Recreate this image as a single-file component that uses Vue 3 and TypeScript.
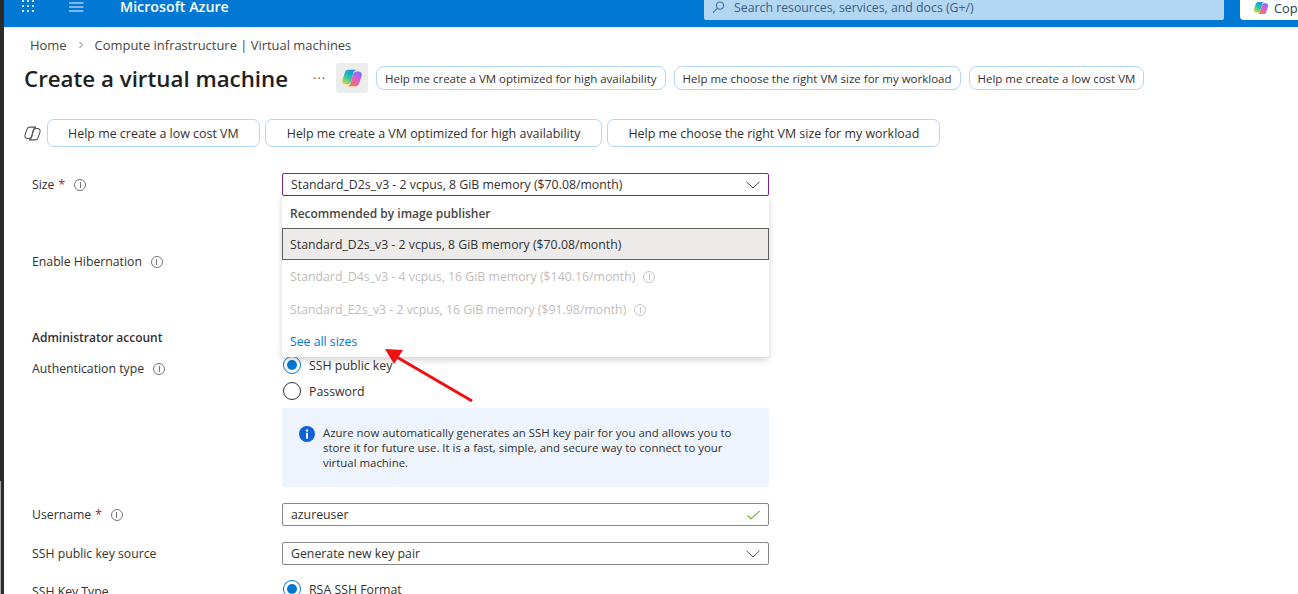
<script setup lang="ts">
const topPrompts: string[] = [
  'Help me create a VM optimized for high availability',
  'Help me choose the right VM size for my workload',
  'Help me create a low cost VM',
]
const lowerPrompts: string[] = [
  'Help me create a low cost VM',
  'Help me create a VM optimized for high availability',
  'Help me choose the right VM size for my workload',
]
const dots: number[][] = [[1,1],[6,1],[11,1],[1,6],[6,6],[11,6],[1,11],[6,11],[11,11]]
</script>

<template>
  <div class="page">
    <div class="strip"></div>
    <div class="main">
      <svg width="0" height="0" class="defs">
        <defs>
          <linearGradient id="g1" x1=".8" y1="0" x2=".1" y2="1"><stop offset="0" stop-color="#1a86ee"/><stop offset=".5" stop-color="#22c4a8"/><stop offset="1" stop-color="#f0d83c"/></linearGradient>
          <linearGradient id="g2" x1=".8" y1="0" x2=".3" y2="1"><stop offset="0" stop-color="#8a6cf5"/><stop offset=".55" stop-color="#e05fc4"/><stop offset="1" stop-color="#f47a3a"/></linearGradient>
          <symbol id="cp" viewBox="0 0 24 24">
            <path d="M8 3h9c-2 .3-3.200 1.800-3.800 4l-2.200 8.500c-.5 2-2 3.500-4 3.500H5C2 19 .7 16.500 1.500 14L4 6.500C4.700 4.300 6 3 8 3z" fill="url(#g1)"/>
            <path d="M16 21H7c2-.3 3.200-1.800 3.800-4L13 8.500C13.500 6.500 15 5 17 5h2c3 0 4.300 2.500 3.500 5L20 17.500c-.7 2.200-2 3.500-4 3.500z" fill="url(#g2)"/>
          </symbol>
        </defs>
      </svg>

      <header class="topbar">
        <div class="tb-left">
          <svg class="waffle" width="13" height="13" viewBox="0 0 13 13"><rect v-for="d in dots" :key="d.join()" :x="d[0]-1" :y="d[1]-1" width="2" height="2" fill="#cfe4f7"/></svg>
          <svg class="burger" width="15" height="10" viewBox="0 0 15 10"><path d="M0 1h14.500M0 5h14.500M0 9h14.500" stroke="#a5cdf0" stroke-width="1.400"/></svg>
          <span class="brand">Microsoft Azure</span>
        </div>
        <div class="search">
          <svg width="13" height="13" viewBox="0 0 13 13" fill="none" stroke="#3f6f99" stroke-width="1.100"><circle cx="8" cy="4.600" r="3.600"/><path d="M5.300 7.300 1 11.600"/></svg>
          <span>Search resources, services, and docs (G+/)</span>
        </div>
        <div class="cop-btn">
          <svg width="16" height="16" viewBox="0 0 24 24"><use href="#cp" /></svg>
          <span>Copilot</span>
        </div>
      </header>

      <nav class="crumbs">
        <span>Home</span>
        <svg width="6" height="8" viewBox="0 0 6 8" fill="none" stroke="#777" stroke-width="1"><path d="M1.500 1 4.500 4 1.500 7"/></svg>
        <span>Compute infrastructure | Virtual machines</span>
      </nav>

      <div class="title-row">
        <h1>Create a virtual machine</h1>
        <span class="more">···</span>
        <div class="cop-tile"><svg width="22" height="22" viewBox="0 0 24 24"><use href="#cp" /></svg></div>
        <div class="chips">
          <button v-for="p in topPrompts" :key="p" class="chip" type="button">{{ p }}</button>
        </div>
      </div>

      <div class="prompt-row">
        <svg class="mono" width="17" height="17" viewBox="0 0 24 24" fill="none" stroke="#555" stroke-width="1.500"><path d="M8 3h9c-2 .3-3.200 1.800-3.800 4l-2.200 8.500c-.5 2-2 3.500-4 3.500H5C2 19 .7 16.500 1.500 14L4 6.500C4.700 4.300 6 3 8 3z"/><path d="M16 21H7c2-.3 3.200-1.800 3.800-4L13 8.500C13.500 6.500 15 5 17 5h2c3 0 4.300 2.500 3.500 5L20 17.500c-.7 2.200-2 3.500-4 3.500z"/></svg>
        <button v-for="p in lowerPrompts" :key="p" class="wide-chip" type="button">{{ p }}</button>
      </div>

      <div class="form">
        <div class="row row-size">
          <label class="lbl">Size <em>*</em><i class="info"></i></label>
          <div class="ctl">
            <div class="select focus">
              <span>Standard_D2s_v3 - 2 vcpus, 8 GiB memory ($70.08/month)</span>
              <svg width="14" height="8" viewBox="0 0 14 8" fill="none" stroke="#444" stroke-width="1"><path d="M.5.800 7 7 13.500.800"/></svg>
            </div>
            <div class="menu">
              <div class="menu-head">Recommended by image publisher</div>
              <div class="opt selected">Standard_D2s_v3 - 2 vcpus, 8 GiB memory ($70.08/month)</div>
              <div class="opt off">Standard_D4s_v3 - 4 vcpus, 16 GiB memory ($140.16/month)<i class="info pale"></i></div>
              <div class="opt off">Standard_E2s_v3 - 2 vcpus, 16 GiB memory ($91.98/month)<i class="info pale"></i></div>
              <div class="opt link">See all sizes</div>
            </div>
          </div>
        </div>

        <div class="row row-hib">
          <label class="lbl">Enable Hibernation<i class="info"></i></label>
        </div>

        <div class="section">Administrator account</div>

        <div class="row row-auth">
          <label class="lbl">Authentication type<i class="info"></i></label>
          <div class="ctl">
            <div class="radios">
              <div class="radio on"><b></b>SSH public key</div>
              <div class="radio"><b></b>Password</div>
            </div>
            <div class="notice">
              <svg width="16" height="16" viewBox="0 0 16 16"><circle cx="8" cy="8" r="8" fill="#0f62d6"/><circle cx="8" cy="4.500" r="1.200" fill="#fff"/><rect x="7" y="6.800" width="2" height="5.800" fill="#fff"/></svg>
              <p>Azure now automatically generates an SSH key pair for you and allows you to store it for future use. It is a fast, simple, and secure way to connect to your virtual machine.</p>
            </div>
          </div>
        </div>

        <div class="row row-user">
          <label class="lbl">Username <em>*</em><i class="info"></i></label>
          <div class="ctl">
            <div class="select plain">
              <span>azureuser</span>
              <svg width="13" height="10" viewBox="0 0 13 10" fill="none" stroke="#6fb52c" stroke-width="1.100"><path d="M.5 5.500 4 9 12.500.8"/></svg>
            </div>
          </div>
        </div>

        <div class="row row-src">
          <label class="lbl">SSH public key source</label>
          <div class="ctl">
            <div class="select plain">
              <span>Generate new key pair</span>
              <svg width="14" height="8" viewBox="0 0 14 8" fill="none" stroke="#444" stroke-width="1"><path d="M.5.800 7 7 13.500.800"/></svg>
            </div>
          </div>
        </div>

        <div class="row row-type">
          <label class="lbl">SSH Key Type</label>
          <div class="ctl">
            <div class="radio on"><b></b>RSA SSH Format</div>
          </div>
        </div>
      </div>

      <svg class="arrow" width="100" height="65" viewBox="0 0 100 65">
        <path d="M87 53 10 8" stroke="#ee1111" stroke-width="3" fill="none"/>
        <path d="M0 1 18 2 9 16z" fill="#ee1111"/>
      </svg>
    </div>
  </div>
</template>

<style>
html, body { margin: 0; background: #fff; overflow: hidden; }
</style>

<style scoped>
.page { display: flex; width: 1298px; height: 594px; overflow: hidden; font-family: "Open Sans", "Noto Sans", sans-serif; font-size: 12px; color: #323130; background: #fff; }
.strip { flex: none; position: relative; width: 4px; background: #2b2b2b; }
.strip::after { content: ""; position: absolute; left: 0; top: 481px; bottom: 0; width: 1px; background: #a8a8a8; }
.main { position: relative; flex: 1; min-width: 0; }
.defs { position: absolute; }
.topbar { display: flex; align-items: flex-start; height: 27px; background: #0078d4; }
.tb-left { flex: none; display: flex; align-items: flex-start; width: 700px; }
.waffle { margin: 0 0 0 18px; }
.burger { margin: 2px 0 0 34px; }
.brand { margin-left: 36px; color: #fff; font-size: 14.250px; font-weight: 600; line-height: 14px; }
.search { flex: none; display: flex; align-items: center; gap: 9px; width: 520px; height: 20px; box-sizing: border-box; padding: 0 0 6px 8px; background: #b3d6f2; color: #3a5f80; font-size: 12.300px; margin-right: 16px; border-radius: 0 0 2px 2px; }
.cop-btn { flex: none; display: flex; align-items: center; gap: 5px; width: 58px; height: 20px; box-sizing: border-box; padding: 0 0 5px 13px; background: #fff; border-radius: 0 0 0 4px; color: #24405c; font-size: 12.800px; overflow: hidden; white-space: nowrap; }
.cop-btn svg { flex: none; }
.crumbs { display: flex; align-items: center; gap: 11px; height: 18px; padding: 9px 0 0 26px; font-size: 12.950px; color: #484644; }
.title-row { display: flex; align-items: center; height: 32px; margin-top: 8px; padding-left: 20px; }
h1 { flex: none; margin: 0; width: 264px; font-size: 22.300px; font-weight: 600; color: #201f1e; white-space: nowrap; }
.more { flex: none; margin-left: 25px; width: 20px; color: #605e5c; font-size: 13px; letter-spacing: 1px; }
.cop-tile { flex: none; display: flex; align-items: center; justify-content: center; width: 32px; height: 30px; margin-left: 3px; background: #ececec; border-radius: 3px; }
.chips { display: flex; gap: 8px; margin-left: 8px; }
.chip { height: 24px; padding: 0 8px; border: 1px solid #b3d6f9; border-radius: 8px; background: #fff; color: #323130; font: inherit; font-size: 11.500px; white-space: nowrap; }
.prompt-row { display: flex; align-items: center; gap: 5px; margin-top: 25px; height: 28px; padding-left: 20px; }
.mono { flex: none; margin-right: 1px; }
.wide-chip { height: 28px; padding: 0 20px; border: 1px solid #b3d6f9; border-radius: 7px; background: #fff; color: #323130; font: inherit; font-size: 12.450px; white-space: nowrap; }
.wide-chip:nth-of-type(2) { padding: 0 21px; }
.form { padding: 26px 0 0 28px; }
.row { display: flex; }
.lbl { flex: none; display: flex; align-items: center; width: 250px; height: 23px; color: #323130; font-size: 12.250px; }
.lbl em { margin-left: 4px; color: #a4262c; font-style: normal; }
.info { flex: none; display: inline-flex; align-items: center; justify-content: center; box-sizing: border-box; width: 12px; height: 12px; margin-left: 9px; border: 1px solid #777; border-radius: 50%; position: relative; }
.info::before { content: ""; width: 1px; height: 5px; margin-top: 1px; background: #777; }
.info::after { content: ""; position: absolute; top: 2px; left: 4.500px; width: 1px; height: 1px; background: #777; }
.info.pale { border-color: #c8c6c4; margin-left: 8px; }
.info.pale::before, .info.pale::after { background: #c8c6c4; }
.ctl { position: relative; flex: none; width: 487px; }
.select { display: flex; align-items: center; justify-content: space-between; box-sizing: border-box; height: 23px; padding: 0 8px; border: 1px solid #8a8886; border-radius: 2px; font-size: 12.300px; color: #323130; }
.select.focus { border-color: #7e22a8; }
.menu { position: absolute; z-index: 2; left: 0; top: 23px; width: 487px; height: 161px; background: #fff; border-radius: 0 0 3px 3px; box-shadow: 0 3px 7px rgba(0,0,0,.18); font-size: 12.300px; }
.menu-head { display: flex; align-items: center; box-sizing: border-box; height: 32px; padding: 2px 0 0 8px; font-weight: 600; font-size: 12px; color: #484644; }
.opt { display: flex; align-items: center; box-sizing: border-box; height: 32px; padding-left: 8px; }
.opt.selected { height: 32px; background: #edebe9; border: 1px solid #605e5c; padding-left: 7px; }
.opt.off { color: #bfbdbb; height: 33px; }
.opt.link { color: #0078d4; height: 30px; font-size: 12.250px; }
.row-size { height: 76px; }
.row-hib { height: 78px; }
.row-hib .lbl { margin-top: 1px; }
.section { display: flex; align-items: center; height: 20px; font-weight: 600; font-size: 12px; color: #323130; }
.row-auth { margin-top: 11px; height: 130px; }
.row-auth .lbl { margin-top: -1px; }
.radios { display: flex; flex-direction: column; gap: 8px; margin-top: -2px; }
.radio { display: flex; align-items: center; gap: 8px; height: 18px; font-size: 12.350px; color: #323130; white-space: nowrap; }
.radio b { flex: none; box-sizing: border-box; position: relative; width: 18px; height: 18px; border: 1px solid #333; border-radius: 50%; margin-left: 1px; }
.radio.on b { border-color: #0078d4; }
.radio.on b::after { content: ""; position: absolute; inset: 3px; background: #0078d4; border-radius: 50%; }
.notice { display: flex; gap: 8px; box-sizing: border-box; height: 79px; margin-top: 8px; padding: 17px 30px 0 17px; background: #eef4fd; border-radius: 2px; font-size: 11.420px; line-height: 15px; color: #323130; }
.notice svg { flex: none; margin-top: 1px; }
.notice p { margin: 0; }
.row-user { margin-top: 15px; height: 39px; }
.row-src { height: 38px; }
.row-type { height: 18px; }
.arrow { position: absolute; z-index: 3; left: 381px; top: 348px; }
</style>
